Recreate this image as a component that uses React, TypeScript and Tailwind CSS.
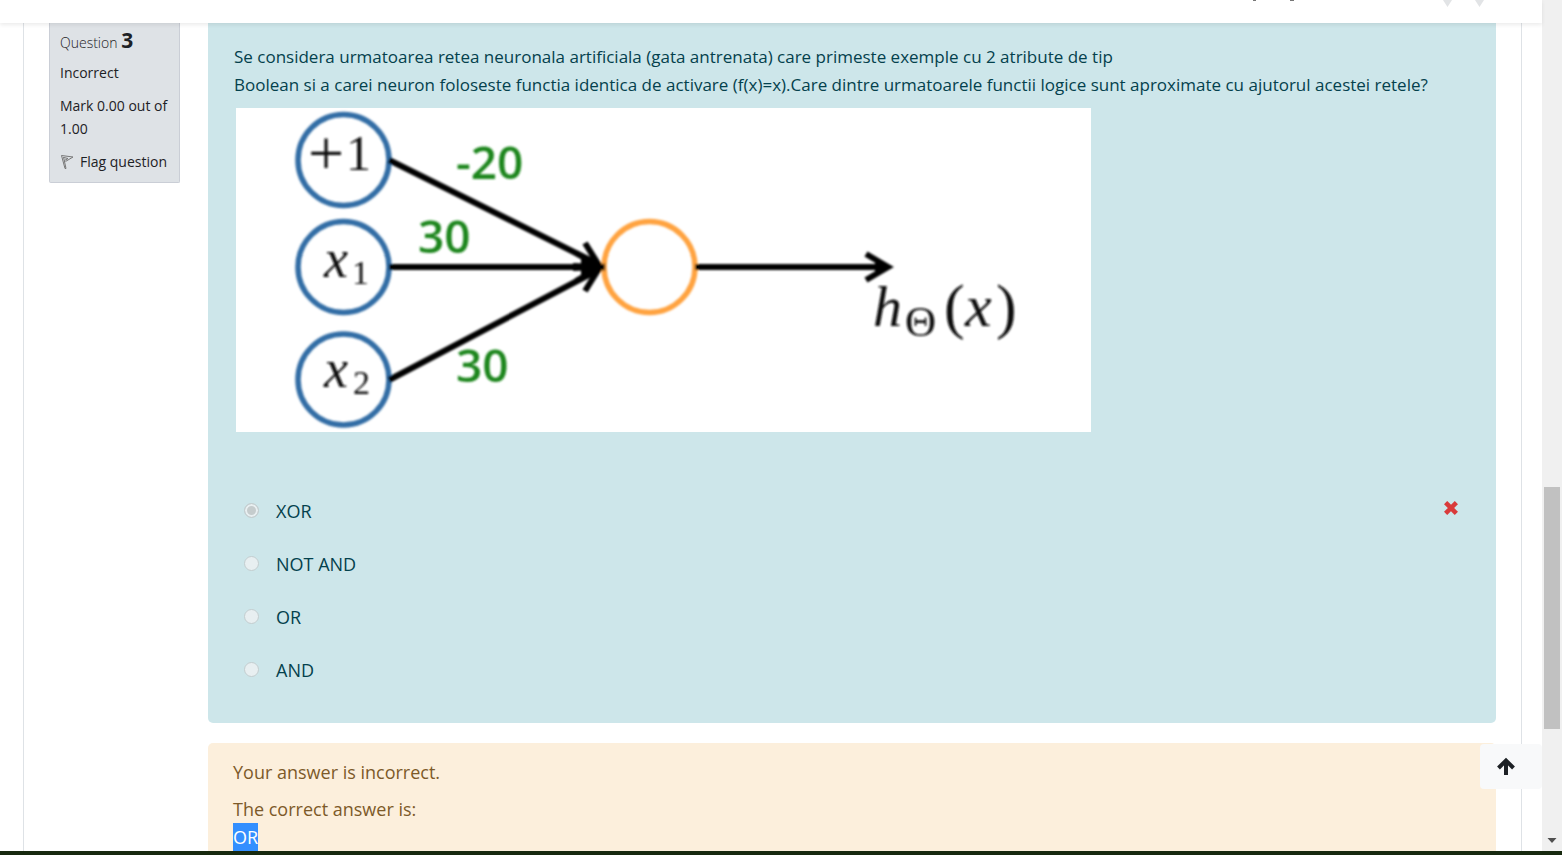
import React from "react";

const answers = [
  { label: "XOR", checked: true },
  { label: "NOT AND", checked: false },
  { label: "OR", checked: false },
  { label: "AND", checked: false },
];

function NetworkDiagram() {
  return (
    <svg
      viewBox="0 0 855 324"
      role="img"
      aria-label="Artificial neuron with three inputs"
      className="mt-[9px] ml-[2px] block w-[855px] max-w-full bg-white"
    >
      <defs>
        <filter id="soft" x="0" y="0" width="855" height="324" filterUnits="userSpaceOnUse">
          <feGaussianBlur stdDeviation="0.9" />
        </filter>
      </defs>
      <g filter="url(#soft)">
        <g fill="none" stroke="#336da5" strokeWidth="5.5">
          <circle cx="107.500" cy="52" r="45.500" />
          <circle cx="107.500" cy="159" r="45.500" />
          <circle cx="107.500" cy="271.500" r="45.500" />
        </g>
        <circle cx="413.500" cy="159" r="45.500" fill="none" stroke="#ffa340" strokeWidth="5.5" />
        <g fill="none" stroke="#000" strokeWidth="6">
          <path d="M153 52 364 157M153 159H364M153 272 364 161M459 159H650" />
          <path d="M340 145 364 159 340 173M349 135 364 159 337 158M349 183 364 159 337 160M630 146 652 159 630 172" />
          <path d="M346 152 366 159 346 166z" fill="#000" strokeWidth="2" />
          <path d="M640 154 654 159 640 164z" fill="#000" strokeWidth="2" />
        </g>
        <g fill="#1f861f" className="font-['Open_Sans'] text-[46px] font-semibold">
          <text x="220" y="71">-20</text>
          <text x="182" y="145">30</text>
          <text x="220" y="274">30</text>
        </g>
        <g fill="#111" className="font-['Liberation_Serif'] text-[50px]">
          <text x="72" y="67" className="text-[64px]">+</text>
          <text x="110" y="62">1</text>
          <text x="88" y="169" className="text-[54px] italic">x</text>
          <text x="116" y="176" className="text-[34px]">1</text>
          <text x="88" y="279" className="text-[54px] italic">x</text>
          <text x="117" y="286" className="text-[34px]">2</text>
          <text x="637" y="218" className="text-[58px] italic">h</text>
          <text x="669" y="228" className="text-[43px]">Θ</text>
          <text x="708" y="219" className="text-[62px]">(</text>
          <text x="729" y="218" className="text-[60px] italic">x</text>
          <text x="760" y="219" className="text-[62px]">)</text>
        </g>
      </g>
    </svg>
  );
}

function QuestionInfo() {
  return (
    <aside className="h-[160px] w-[131px] shrink-0 rounded-b-[2px] border border-t-0 border-[#caced6] bg-[#dee2e6] px-[10px] text-[14px] leading-[23px] text-[#1d2125]">
      <h3 className="pt-[2px] font-light leading-[30px]">
        Question <span className="text-[21px] font-bold">3</span>
      </h3>
      <div className="mt-[3px]">Incorrect</div>
      <div className="mt-[10px]">Mark 0.00 out of 1.00</div>
      <a href="#flag" className="mt-[10px] flex items-center whitespace-nowrap">
        <svg viewBox="0 0 16 16" className="mr-1 h-4 w-4" fill="none" stroke="#777" strokeWidth="1">
          <path d="M1.500 1.500 5 14.500 6 14.500 3.500 3M1.500 1.500 13 3 5.500 7.500M4.500 6.500 8 4.500 4 3.500" />
        </svg>
        Flag question
      </a>
    </aside>
  );
}

function Question() {
  return (
    <section className="h-[700px] rounded-b-[5px] bg-[#cde6ea] pl-[26px] pr-[36px] pt-5 text-[18px] leading-7 text-[#04414d]">
      <p className="whitespace-nowrap text-[17px]">
        Se considera urmatoarea retea neuronala artificiala (gata antrenata) care primeste exemple cu 2 atribute de tip
        <br />
        Boolean si a carei neuron foloseste functia identica de activare (f(x)=x).Care dintre urmatoarele functii logice
        sunt aproximate cu ajutorul acestei retele?
      </p>
      <NetworkDiagram />
      <fieldset disabled className="mt-[65px] flex flex-col gap-[25px]">
        {answers.map((a) => (
          <div key={a.label} className="flex h-7 items-start justify-between">
            <label className="flex items-center gap-[17px] pl-[10px]">
              <input
                type="radio"
                name="answer"
                defaultChecked={a.checked}
                className="mb-[2px] size-[15px] appearance-none rounded-full border border-[#c3cdcf] bg-[#e8eff1] checked:bg-[#c5cccd] checked:shadow-[inset_0_0_0_2px_#e8eff1]"
              />
              {a.label}
            </label>
            {a.checked && (
              <svg viewBox="0 0 14 14" role="img" aria-label="Incorrect" className="mt-1 mr-[2px] size-[14px]">
                <path d="M3.200 3.200 10.800 10.800M10.800 3.200 3.200 10.800" stroke="#d93a3a" strokeWidth="4.500" strokeLinecap="square" />
              </svg>
            )}
          </div>
        ))}
      </fieldset>
    </section>
  );
}

export default function App() {
  return (
    <div className="flex h-screen flex-col overflow-hidden bg-white font-['Open_Sans',sans-serif]">
      <div className="flex min-h-0 flex-1">
        <div className="relative flex min-w-0 flex-1 flex-col">
          <header className="z-10 flex h-[23px] shrink-0 items-start justify-end bg-white pr-[58px] shadow-[0_2px_4px_rgba(0,0,0,0.08)]">
            <svg viewBox="0 0 236 8" className="h-2 w-[236px]">
              <path d="M5 0h3M42 0h4" stroke="#777" strokeWidth="2" />
              <path d="M195 0h9l-4.500 7zM227 0h9l-4.500 7z" fill="#e2e4e6" />
            </svg>
          </header>
          <main className="mr-[20px] ml-[23px] flex min-h-0 flex-1 gap-7 overflow-hidden border-x border-[#dee2e6] pl-[25px] pr-[25px]">
            <QuestionInfo />
            <div className="min-w-0 flex-1">
              <Question />
              <section className="mt-5 h-[120px] rounded-t-[5px] bg-[#fcefdc] px-[25px] pt-[15px] text-[18px] leading-7 text-[#7d5a29]">
                <p>Your answer is incorrect.</p>
                <p className="mt-[9px]">
                  The correct answer is:
                  <br />
                  <mark className="inline-block bg-[#338fff] text-white">OR</mark>
                </p>
              </section>
            </div>
          </main>
          <button
            type="button"
            aria-label="Back to top"
            className="absolute right-0 bottom-[62px] flex h-[45px] w-[62px] items-center rounded-[4px] bg-[#f8f9fa] pl-4"
          >
            <svg viewBox="0 0 20 20" className="size-5" fill="none" stroke="#1d2125" strokeWidth="4">
              <path d="M10 18V5M2.500 11 10 3.500 17.500 11" />
            </svg>
          </button>
        </div>
        <div aria-hidden="true" className="flex w-5 shrink-0 flex-col items-center justify-end bg-[#f0f0f0]">
          <div className="h-[242px] w-4 bg-[#c1c1c1]" />
          <svg viewBox="0 0 20 20" className="mt-[101px] mb-[1px] size-5">
            <path d="M5.500 8h9L10 13z" fill="#505050" />
          </svg>
        </div>
      </div>
      <div className="h-1 shrink-0 bg-[#17290f]" />
    </div>
  );
}
